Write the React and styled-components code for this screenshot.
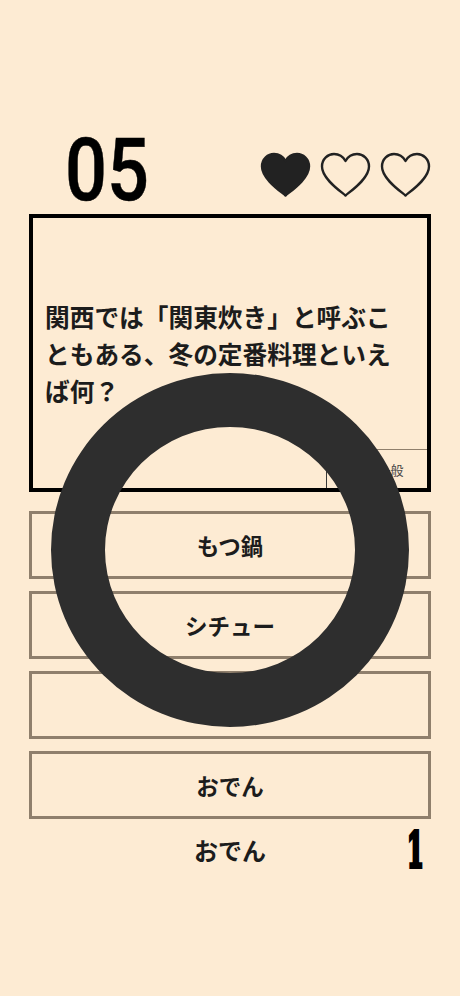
import styled, { createGlobalStyle } from "styled-components";

const GlobalStyle = createGlobalStyle`
  html, body {
    margin: 0;
    padding: 0;
    background: #fdebd3;
  }
  * {
    box-sizing: border-box;
  }
`;

const Page = styled.div`
  position: relative;
  width: 460px;
  height: 996px;
  padding: 138px 29px 0;
  background: #fdebd3;
  color: #1c1c1c;
  font-family: "Noto Sans CJK JP", "Noto Sans", sans-serif;
  overflow: hidden;
`;

const Header = styled.div`
  display: flex;
  justify-content: space-between;
  align-items: flex-start;
  height: 76px;
`;

const Count = styled.div`
  margin-left: 36px;
  width: 88px;
  height: 64px;
  font-family: "Roboto", "Liberation Sans", sans-serif;
  font-size: 87px;
  font-weight: 500;
  line-height: 64px;
  color: #000;
  transform: scaleX(0.85);
  transform-origin: left center;
  -webkit-text-stroke: 0.5px #000;
`;

const Hearts = styled.div`
  display: flex;
  gap: 9px;
  margin-top: 14px;
`;

const QuestionBox = styled.div`
  position: relative;
  display: flex;
  align-items: center;
  height: 278px;
  padding: 0 12px;
  border: 4px solid #000;
  margin-bottom: 19px;
`;

const Question = styled.p`
  margin: 0;
  width: 356px;
  font-size: 24.7px;
  font-weight: 700;
  line-height: 37px;
`;

const Genre = styled.div`
  position: absolute;
  right: 0;
  bottom: 0;
  display: flex;
  align-items: center;
  justify-content: center;
  width: 101px;
  height: 39px;
  padding-left: 27px;
  border-top: 1px solid #8f7f6c;
  border-left: 1px solid #3a3a3a;
  font-size: 13px;
  color: #444;
`;

const Options = styled.div`
  display: flex;
  flex-direction: column;
  gap: 12px;
`;

const Option = styled.div`
  display: flex;
  align-items: center;
  justify-content: center;
  height: 68px;
  border: 3px solid #8f7f6c;
  font-size: 22.5px;
  font-weight: 700;
`;

const Footer = styled.div`
  position: relative;
  display: flex;
  align-items: center;
  justify-content: center;
  height: 60px;
`;

const Answer = styled.div`
  font-size: 24px;
  font-weight: 700;
`;

const Score = styled.div`
  position: absolute;
  left: 378px;
  top: 11px;
  height: 40px;
  font-family: "DejaVu Serif", "Liberation Serif", serif;
  font-size: 48px;
  font-weight: 700;
  line-height: 40px;
  color: #000;
  transform: scaleX(0.5);
  transform-origin: left center;
  -webkit-text-stroke: 4px #000;
`;

const Ring = styled.div`
  position: absolute;
  left: 51px;
  top: 373px;
  width: 358px;
  height: 354px;
  border: 54px solid #2e2e2e;
  border-radius: 50%;
`;

const HEART =
  "M25.5 43.5 C21 39.5 2 27 2 14.5 C2 7 8 2 14 2 C19 2 23 4.5 25.5 9 C28 4.5 32 2 37 2 C43 2 49 7 49 14.5 C49 27 30 39.5 25.5 43.5 Z";

const Heart = ({ filled }) => (
  <svg width="51" height="46" viewBox="0 0 51 46">
    <path
      d={HEART}
      fill={filled ? "#222" : "none"}
      stroke="#222"
      strokeWidth="2.4"
      strokeLinejoin="round"
    />
  </svg>
);

export default function App() {
  return (
    <>
      <GlobalStyle />
      <Page>
        <Header>
          <Count>05</Count>
          <Hearts>
            <Heart filled />
            <Heart />
            <Heart />
          </Hearts>
        </Header>
        <QuestionBox>
          <Question>関西では「関東炊き」と呼ぶこともある、冬の定番料理といえば何？</Question>
          <Genre>一般</Genre>
        </QuestionBox>
        <Options>
          <Option>もつ鍋</Option>
          <Option>シチュー</Option>
          <Option />
          <Option>おでん</Option>
        </Options>
        <Footer>
          <Answer>おでん</Answer>
          <Score>1</Score>
        </Footer>
        <Ring />
      </Page>
    </>
  );
}
